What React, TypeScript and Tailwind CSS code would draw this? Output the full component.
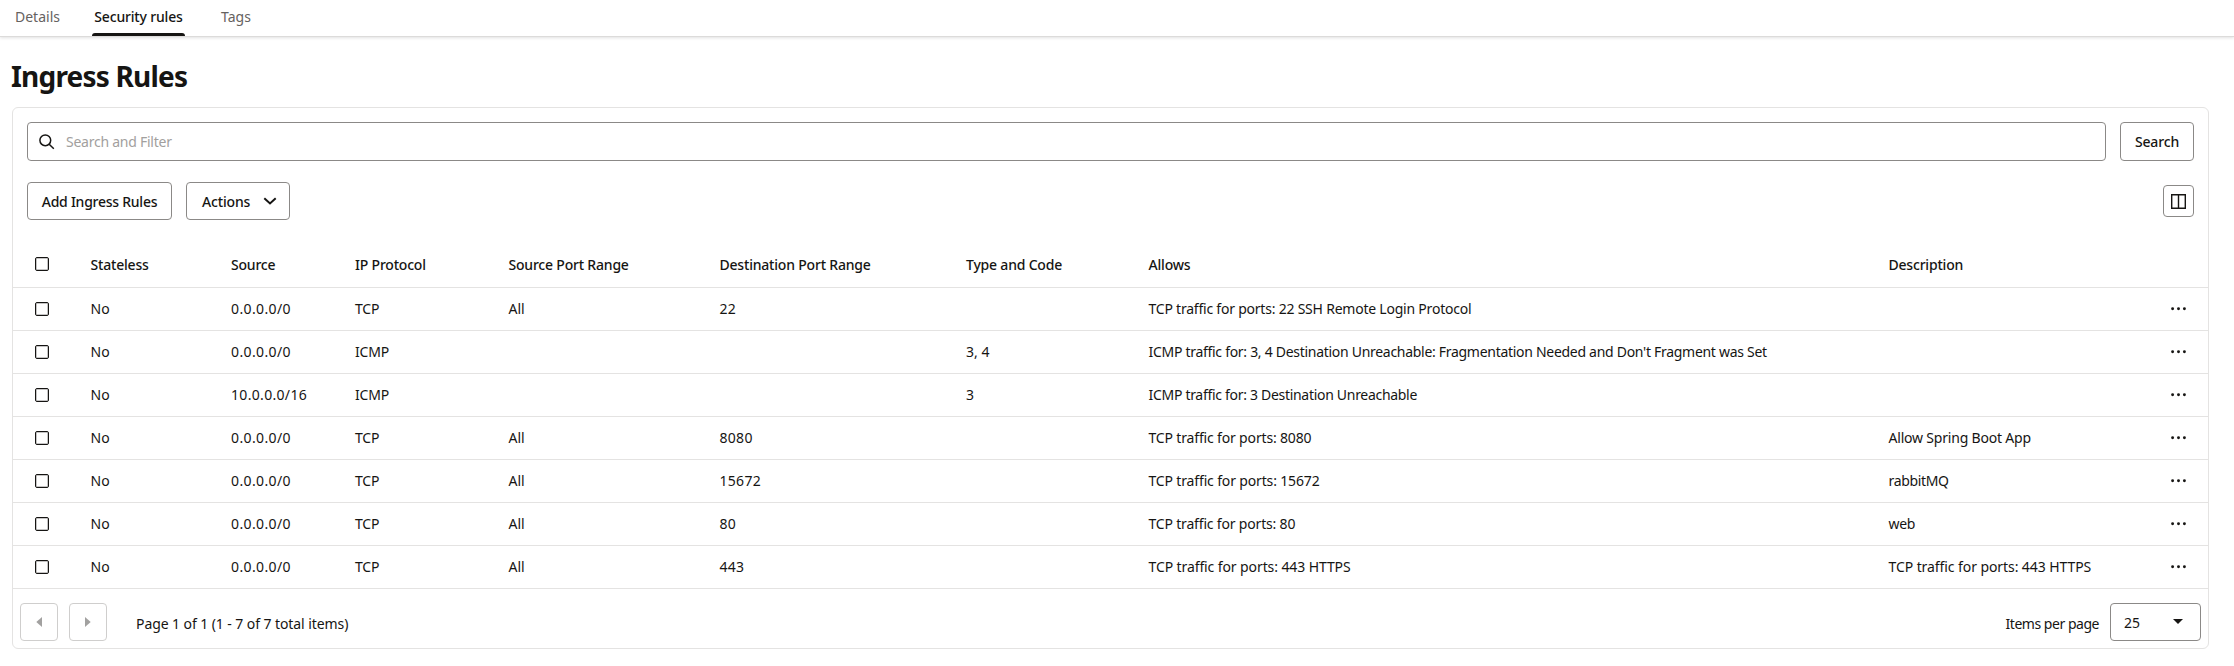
type Rule = {
  source: string;
  sourceTrack: string;
  protocol: string;
  ports: string;
  dest: string;
  code: string;
  allows: string;
  allowsTrack: string;
  description: string;
  descriptionTrack: string;
};

const wide = 'tracking-[0.38px]';
const none = 'tracking-normal';

const rules: Rule[] = [
  { source: '0.0.0.0/0', sourceTrack: wide, protocol: 'TCP', ports: 'All', dest: '22', code: '', allows: 'TCP traffic for ports: 22 SSH Remote Login Protocol', allowsTrack: 'tracking-[-0.22px]', description: '', descriptionTrack: none },
  { source: '0.0.0.0/0', sourceTrack: wide, protocol: 'ICMP', ports: '', dest: '', code: '3, 4', allows: "ICMP traffic for: 3, 4 Destination Unreachable: Fragmentation Needed and Don't Fragment was Set", allowsTrack: 'tracking-[-0.29px]', description: '', descriptionTrack: none },
  { source: '10.0.0.0/16', sourceTrack: 'tracking-[0.32px]', protocol: 'ICMP', ports: '', dest: '', code: '3', allows: 'ICMP traffic for: 3 Destination Unreachable', allowsTrack: 'tracking-[-0.3px]', description: '', descriptionTrack: none },
  { source: '0.0.0.0/0', sourceTrack: wide, protocol: 'TCP', ports: 'All', dest: '8080', code: '', allows: 'TCP traffic for ports: 8080', allowsTrack: 'tracking-[-0.16px]', description: 'Allow Spring Boot App', descriptionTrack: 'tracking-[-0.2px]' },
  { source: '0.0.0.0/0', sourceTrack: wide, protocol: 'TCP', ports: 'All', dest: '15672', code: '', allows: 'TCP traffic for ports: 15672', allowsTrack: 'tracking-[-0.15px]', description: 'rabbitMQ', descriptionTrack: 'tracking-[-0.35px]' },
  { source: '0.0.0.0/0', sourceTrack: wide, protocol: 'TCP', ports: 'All', dest: '80', code: '', allows: 'TCP traffic for ports: 80', allowsTrack: 'tracking-[-0.18px]', description: 'web', descriptionTrack: 'tracking-[-0.3px]' },
  { source: '0.0.0.0/0', sourceTrack: wide, protocol: 'TCP', ports: 'All', dest: '443', code: '', allows: 'TCP traffic for ports: 443 HTTPS', allowsTrack: 'tracking-[-0.1px]', description: 'TCP traffic for ports: 443 HTTPS', descriptionTrack: 'tracking-[-0.08px]' },
];

const columns = ['Stateless', 'Source', 'IP Protocol', 'Source Port Range', 'Destination Port Range', 'Type and Code', 'Allows', 'Description'];

const grid = 'grid grid-cols-[77.5px_140.5px_124px_153.5px_211px_246.5px_182.5px_740px_282.5px_1fr] items-center border-b border-[#e4e3e2]';

function Checkbox() {
  return <span className="ml-[22px] block size-3.5 rounded-[2px] border border-[#161513] shadow-[inset_0_0_0_1px_rgba(22,21,19,0.25)]" />;
}

function Dots() {
  return (
    <svg width="16" height="4" viewBox="0 0 16 4" fill="#161513">
      <circle cx="1.6" cy="1.7" r="1.45" />
      <circle cx="7.5" cy="1.7" r="1.45" />
      <circle cx="13.4" cy="1.7" r="1.45" />
    </svg>
  );
}

function PageButton({ d }: { d: string }) {
  return (
    <button className="flex size-[38px] items-center justify-center rounded-[4px] border border-[#cfcecd]">
      <svg width="6" height="10" viewBox="0 0 6 10" fill="#a2a1a0">
        <path d={d} />
      </svg>
    </button>
  );
}

export default function App() {
  return (
    <div className="h-[666px] w-[2234px] overflow-hidden bg-white font-['Noto_Sans',sans-serif] text-[14px] leading-5 text-[#161513]">
      <nav className="flex h-[36px] items-start pl-[15px] shadow-[0_1px_0_#dcdbda,0_2px_3px_rgba(0,0,0,0.12)]">
        <span className="mt-[7px] w-[77px] text-[#66625f]">Details</span>
        <span className="flex h-[36px] w-[93px] flex-col items-center justify-between pt-[7px] font-medium tracking-[-0.18px]">
          Security rules
          <span className="h-[3px] w-full rounded-t-[3px] bg-[#161513]" />
        </span>
        <span className="mt-[7px] ml-[36px] text-[#66625f]">Tags</span>
      </nav>

      <h1 className="mt-[22px] ml-3 h-[49px] text-[28px] leading-9 font-bold tracking-[-0.8px]">
        <span className="-ml-px">Ingress Rules</span>
      </h1>

      <section className="ml-3 h-[542px] w-[2197px] rounded-[6px] border border-[#e4e3e2]">
        <div className="flex gap-3.5 px-3.5 pt-3.5">
          <div className="flex h-[39px] w-[2079px] items-center rounded-[4px] border border-[#8b8987] pl-[11px]">
            <svg width="16" height="16" viewBox="0 0 16 16" fill="none" stroke="#161513" strokeWidth="1.5">
              <circle cx="6.3" cy="6.3" r="5.4" />
              <path d="M10.2 10.2L14.8 14.8" />
            </svg>
            <span className="ml-[11px] tracking-[-0.25px] text-[#a2a09e]">Search and Filter</span>
          </div>
          <button className="h-[39px] w-[74px] rounded-[4px] border border-[#8b8987] font-medium tracking-[-0.15px]">Search</button>
        </div>

        <div className="flex items-center px-3.5 pt-[21px]">
          <button className="h-[38px] w-[145px] rounded-[4px] border border-[#8b8987] pt-0.5 font-medium tracking-[-0.25px]">Add Ingress Rules</button>
          <button className="ml-3.5 flex h-[38px] w-[104px] items-center rounded-[4px] border border-[#8b8987] pl-[15px] font-medium tracking-[-0.15px]">
            <span className="pt-0.5">Actions</span>
            <svg width="14" height="8" viewBox="0 0 14 8" fill="none" stroke="#161513" strokeWidth="2" className="ml-[12.5px]">
              <path d="M1.3 1.2L7 6.4L12.7 1.2" />
            </svg>
          </button>
          <button className="ml-auto flex h-[32px] w-[31px] items-center justify-center rounded-[4px] border border-[#8b8987]">
            <svg width="15" height="15" viewBox="0 0 15 15" fill="none" stroke="#161513" strokeWidth="1.4">
              <path d="M.7.7H14.3V14.3H.7ZM7.5.7V14.3" />
            </svg>
          </button>
        </div>

        <div className={`${grid} h-[68px] pt-[21px] font-medium tracking-[-0.2px]`}>
          <Checkbox />
          {columns.map((c) => (
            <span key={c} className="translate-y-px whitespace-nowrap">{c}</span>
          ))}
        </div>
        {rules.map((r, i) => (
          <div key={i} className={`${grid} h-[43px]`}>
            <Checkbox />
            <span>No</span>
            <span className={r.sourceTrack}>{r.source}</span>
            <span className="tracking-[-0.2px]">{r.protocol}</span>
            <span>{r.ports}</span>
            <span className="tracking-[0.3px]">{r.dest}</span>
            <span>{r.code}</span>
            <span className={`whitespace-nowrap ${r.allowsTrack}`}>{r.allows}</span>
            <span className={`whitespace-nowrap ${r.descriptionTrack}`}>{r.description}</span>
            <Dots />
          </div>
        ))}

        <div className="flex pt-[14px] pr-[7px] pl-[7px]">
          <PageButton d="M6 0V10L0.3 5Z" />
          <span className="w-[11px]" />
          <PageButton d="M0 0V10L5.7 5Z" />
          <span className="mt-[11px] ml-[29px] tracking-[-0.08px]">Page 1 of 1 (1 - 7 of 7 total items)</span>
          <span className="mt-[11px] ml-auto tracking-[-0.47px]">Items per page</span>
          <div className="ml-[11px] flex h-[38px] w-[91px] items-center rounded-[4px] border border-[#8b8987] pl-[13px]">
            <span className="w-[49px] pt-0.5">25</span>
            <svg width="10" height="5" viewBox="0 0 10 5" fill="#161513" className="-translate-y-px">
              <path d="M0 0H10L5 5Z" />
            </svg>
          </div>
        </div>
      </section>
    </div>
  );
}
